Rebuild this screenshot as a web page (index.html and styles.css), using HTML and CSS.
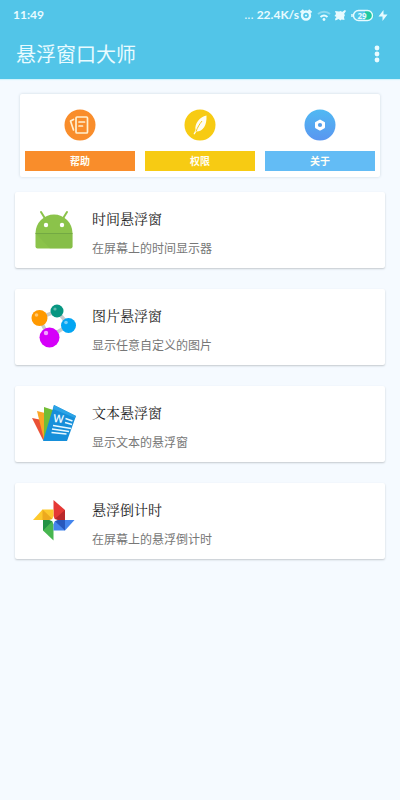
FILE: index.html
```html
<!DOCTYPE html>
<html lang="zh-CN">
<head>
<meta charset="utf-8">
<meta name="viewport" content="width=device-width, initial-scale=1">
<title>悬浮窗口大师</title>
<link rel="stylesheet" href="styles.css">
</head>
<body>
<header class="top">
  <div class="status">
    <span class="clock">11:49</span>
    <span class="dots">...</span>
    <span class="speed">22.4K/s</span>
    <svg class="status-icons" width="93" height="16" viewBox="0 0 93 16" fill="#e6fbff" aria-hidden="true">
      <circle cx="7" cy="8.500" r="4" fill="none" stroke="#e6fbff" stroke-width="2.400"/>
      <circle cx="7" cy="8.500" r="1.100"/>
      <path d="M1.500 5.500L4.500 3M12.500 5.500L9.500 3" stroke="#e6fbff" stroke-width="2"/>
      <path d="M19 7a9 9 0 0 1 12 0" fill="none" stroke="#e6fbff" stroke-opacity=".4" stroke-width="2"/>
      <path d="M21.500 10a5.500 5.500 0 0 1 7 0" fill="none" stroke="#e6fbff" stroke-width="2"/>
      <circle cx="25" cy="12.500" r="1.400"/>
      <path d="M36 4l4 .5 2-.5 1 1 3-2 1 1-2 3 1 1-1 2 .5 3-3-.5-1 1-2-1.500-3 1.500-.5-1.500 1.500-2-2-1 1.500-2z"/>
      <path d="M66 4h4a4 4 0 0 1 0 9h-4z" fill="#1fc9a2"/>
      <rect x="54.500" y="3.500" width="19" height="10" rx="5" fill="none" stroke="#e6fbff" stroke-width="1.400"/>
      <path d="M53 7v3" stroke="#e6fbff" stroke-width="1.500"/>
      <text x="58.500" y="11.500" class="battery">29</text>
      <path d="M84.500 3v4.500h4l-5 6.500v-4.500h-4z"/>
    </svg>
  </div>
  <div class="bar">
    <h1>悬浮窗口大师</h1>
    <button class="more" type="button" aria-label="更多选项">
      <svg width="6" height="18" viewBox="0 0 6 18" fill="#e9fbff" aria-hidden="true"><circle cx="3" cy="3" r="2.400"/><circle cx="3" cy="9" r="2.400"/><circle cx="3" cy="15" r="2.400"/></svg>
    </button>
  </div>
</header>
<main>
  <nav class="panel">
    <button class="action help" type="button">
      <svg width="32" height="32" viewBox="0 0 32 32" aria-hidden="true">
        <circle cx="16" cy="16" r="15.500" fill="#f98d2b"/>
        <g fill="none" stroke="#fff0cf" stroke-width="1.700" stroke-linejoin="round" stroke-linecap="round"><rect x="12" y="8" width="11.500" height="16" rx="1"/><path d="M15 13h5.500M15 17h3.500M9.500 10.500L6.500 12l3 9"/></g>
      </svg>
      <span>帮助</span>
    </button>
    <button class="action rights" type="button">
      <svg width="32" height="32" viewBox="0 0 32 32" aria-hidden="true">
        <circle cx="16" cy="16" r="15.500" fill="#f7cb13"/>
        <path d="M22.500 6.500c-7 1.500-12 8-11 14.500l-2 4 1 .5 2-3c6.500 0 10.500-6 10-16z" fill="#fffdf0"/><path d="M12 22.500c1.500-4 3.500-7.500 6-10.500" fill="none" stroke="#f7cb13"/>
      </svg>
      <span>权限</span>
    </button>
    <button class="action about" type="button">
      <svg width="32" height="32" viewBox="0 0 32 32" aria-hidden="true">
        <defs><linearGradient id="blue" x1="0" y1="0" x2="0" y2="1"><stop offset="0" stop-color="#50b9f3"/><stop offset="1" stop-color="#5a96f0"/></linearGradient></defs>
        <circle cx="16" cy="16" r="15.500" fill="url(#blue)"/>
        <path d="M16 11.500l4 2.300v4.500L16 20.600l-4-2.300v-4.500z" fill="#fff" stroke="#fff" stroke-width="2" stroke-linejoin="round"/><circle cx="16" cy="16" r="2.100" fill="#569ee8"/>
      </svg>
      <span>关于</span>
    </button>
  </nav>
  <ul class="list">
    <li><a class="card" href="#time">
      <svg class="icon" viewBox="0 0 60 60" aria-hidden="true">
        <path d="M17 12l5 8M43 12l-5 8" stroke="#8bc34a" stroke-width="2" stroke-linecap="round"/>
        <path d="M11.500 33a18.500 18.500 0 0 1 37 0v13.500a2 2 0 0 1-2 2h-33a2 2 0 0 1-2-2z" fill="#8bc34a"/>
        <path d="M12 34l14 14.500h20.500a2 2 0 0 0 2-2V34z" fill="#7fb444" opacity=".35"/><path d="M11.500 33.500h37" stroke="#73a943"/>
        <circle cx="22" cy="25" r="2.200" fill="#fff"/><circle cx="38" cy="25" r="2.200" fill="#fff"/>
      </svg>
      <span class="copy"><strong>时间悬浮窗</strong><small>在屏幕上的时间显示器</small></span>
    </a></li>
    <li><a class="card" href="#image">
      <svg class="icon" viewBox="0 0 60 60" aria-hidden="true">
        <path d="M15 21L33 14 45 28 25 40z" fill="none" stroke="#c8cbcc" stroke-width="3.500"/>
        <circle cx="33" cy="14" r="6.500" fill="#079681"/><circle cx="31" cy="12" r="1.600" fill="#63b9ac"/>
        <circle cx="15.500" cy="21" r="8" fill="#ff9900"/><circle cx="12.500" cy="18" r="1.800" fill="#ffc76f"/>
        <circle cx="44.500" cy="28.500" r="7.500" fill="#03a5f2"/><circle cx="42" cy="25.500" r="1.800" fill="#79cff8"/>
        <circle cx="25.500" cy="40.500" r="10" fill="#d500f9"/><circle cx="22" cy="36" r="2.200" fill="#f1a6ff"/>
      </svg>
      <span class="copy"><strong>图片悬浮窗</strong><small>显示任意自定义的图片</small></span>
    </a></li>
    <li><a class="card" href="#text">
      <svg class="icon" viewBox="0 0 60 60" aria-hidden="true">
        <path d="M8 24l10 2 5 19-4 1z" fill="#ea5136"/><path d="M13 17l12 3-3 26h-2z" fill="#fba526"/><path d="M20 13l12 4-10 30h-2z" fill="#72bd35"/>
        <path d="M30 11l22 11-9 25H19z" fill="#168fda"/><path d="M30 11l22 11-1 2-22-9z" fill="#2ca3e6"/>
        <text x="29" y="28" class="doc-letter" transform="rotate(6 29 28)">W</text>
        <path d="M41.500 24.500l7 2.500M41 28.500l7 2M29 31.500l18 3M28 35l17 2.500M27.500 38.500l15 1.500" stroke="#e8f8ff" stroke-width="1.500"/>
      </svg>
      <span class="copy"><strong>文本悬浮窗</strong><small>显示文本的悬浮窗</small></span>
    </a></li>
    <li><a class="card" href="#countdown">
      <svg class="icon" viewBox="0 0 60 60" aria-hidden="true">
        <path d="M29.500 9L41 19v10H29.500z" fill="#e53935"/><path d="M29.500 29L41 19v10z" fill="#b9292b"/>
        <path d="M9 29l9.500-10.500h11V29z" fill="#fdc92d"/><path d="M18.500 18.500L29.500 29h-11z" fill="#eda91e"/>
        <path d="M29.500 29v20.500L19 39.500V29z" fill="#47b650"/><path d="M29.500 29L19 39.500V29z" fill="#239344"/>
        <path d="M29.500 29H50.500L41 39.500H29.500z" fill="#4485ed"/><path d="M29.500 29H41v10.500z" fill="#2758bd"/>
        <path d="M29.500 25l1.200 3 3 1-3 1.200-1.200 3-1.200-3-3-1.200 3-1z" fill="#fff"/>
      </svg>
      <span class="copy"><strong>悬浮倒计时</strong><small>在屏幕上的悬浮倒计时</small></span>
    </a></li>
  </ul>
</main>
</body>
</html>
```
FILE: styles.css
```css
* { box-sizing: border-box; }
body {
  margin: 0;
  min-height: 100vh;
  background: #f5faff;
  font-family: "Noto Sans", "Noto Sans CJK SC", sans-serif;
}
button { border: 0; padding: 0; background: none; font-family: inherit; cursor: pointer; }
svg { display: block; flex: none; }
.top {
  height: 79px;
  background: #52c5e8;
  color: #e9fbff;
  box-shadow: 0 1px 1px #d3f4fc;
}
.status {
  display: flex;
  align-items: center;
  height: 29px;
  padding: 0 8px 0 13px;
}
.clock { margin-right: auto; font: 700 12px/16px Lato, sans-serif; }
.speed { font: 700 12px/16px Lato, sans-serif; }
.dots { margin-right: 3px; font: 400 12px/16px "Open Sans", sans-serif; }
.battery { font: 700 8px "Open Sans", sans-serif; }
.bar {
  display: flex;
  align-items: center;
  justify-content: space-between;
  height: 50px;
  padding: 0 20px 0 16px;
}
h1 { margin: 0; font: 400 20px/28px "Noto Sans CJK SC", sans-serif; }
main { padding: 15px; }
.panel {
  display: grid;
  grid-template-columns: repeat(3, 1fr);
  gap: 10px;
  margin: 0 5px 15px;
  padding: 15px 5px 6px;
  background: #fff;
  border-radius: 2px;
  box-shadow: 0 0 3px #cdd6df;
}
.action { display: flex; flex-direction: column; align-items: center; gap: 10px; }
.action span {
  width: 100%;
  color: #fffef5;
  font: 700 10px/20px "Noto Sans CJK SC", sans-serif;
}
.help span { background: #f98d2b; }
.rights span { background: #f7cb13; }
.about span { background: #63bcf5; }
.list {
  display: grid;
  gap: 21px;
  margin: 0;
  padding: 0;
  list-style: none;
}
.card {
  display: flex;
  align-items: center;
  gap: 8px;
  height: 76px;
  padding: 0 9px;
  background: #fff;
  border-radius: 2px;
  box-shadow: 0 1px 2px #c3c8cd;
  color: #222;
  text-decoration: none;
}
.icon { width: 60px; height: 60px; }
.copy { display: flex; flex-direction: column; gap: 10px; padding-top: 5px; }
.copy strong { font: 400 14px/20px "Noto Serif CJK SC", "Noto Sans CJK SC", serif; }
.copy small { color: #777; font: 400 12px/20px "Noto Sans CJK SC", sans-serif; }
.doc-letter { font: 600 11px "Open Sans", sans-serif; fill: #f2fcff; }
```
